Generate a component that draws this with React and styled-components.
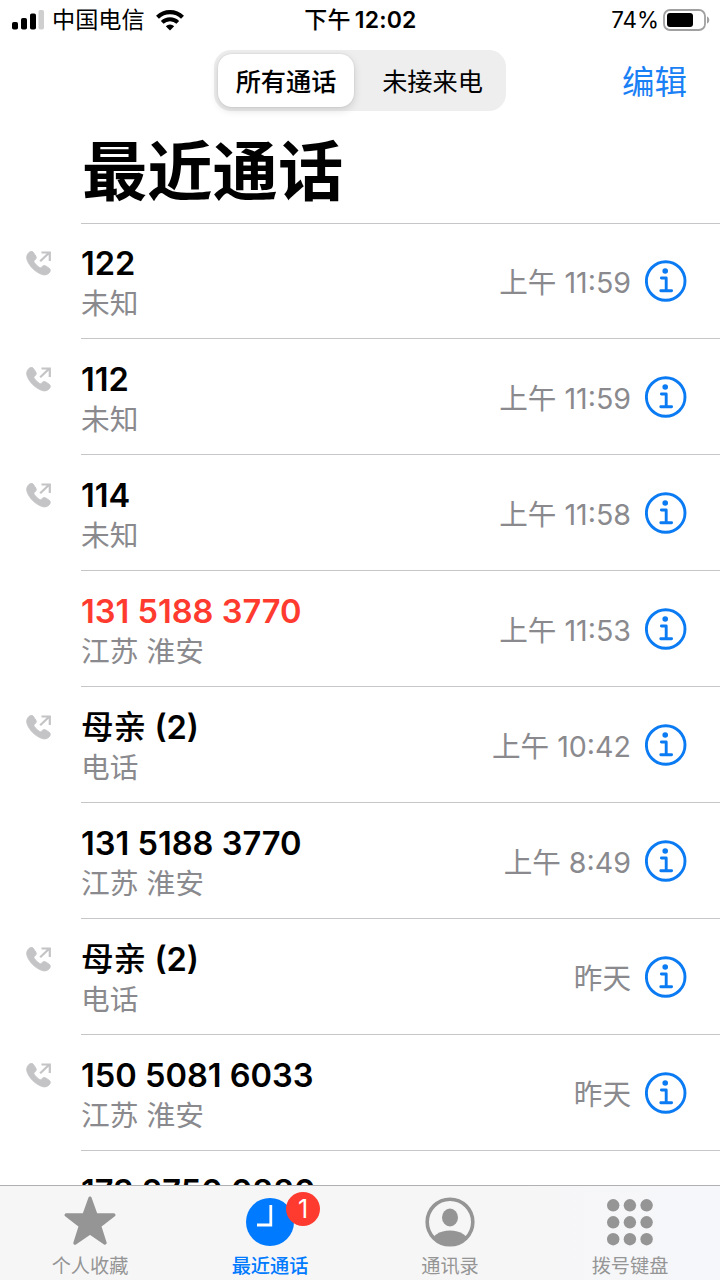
import React from 'react';
import styled, { createGlobalStyle } from 'styled-components';

const GlobalStyle = createGlobalStyle`
    * {
        box-sizing: border-box;
    }
    body {
        margin: 0;
        background: #fff;
        font-family: Inter, 'Noto Sans CJK SC', sans-serif;
        color: #000;
    }
    svg {
        display: block;
    }
`;

const Screen = styled.div`
    width: 720px;
    height: 1280px;
    display: flex;
    flex-direction: column;
    overflow: hidden;
    background: #fff;
    white-space: nowrap;
`;

const StatusBar = styled.div`
    display: grid;
    grid-template-columns: 1fr auto 1fr;
    align-items: center;
    height: 40px;
    padding: 0 10px 0 12px;
    font-size: 23px;
    line-height: 40px;
`;

const StatusGroup = styled.div`
    display: flex;
    align-items: center;
    justify-content: ${props => props.$end ? 'flex-end' : 'flex-start'};
    gap: ${props => props.$end ? '4px' : '8px'};
`;

const Carrier = styled.span`
    margin-right: 3px;
    font-size: 23.2px;
`;

const BatteryLevel = styled.span`
    font-size: 22.4px;
`;

const Clock = styled.div`
    margin-left: -1px;
    font-weight: 600;
    letter-spacing: 0.2px;
    span {
        font-weight: 500;
        margin-right: 4px;
    }
`;

const NavBar = styled.div`
    display: grid;
    grid-template-columns: 1fr 292px 1fr;
    align-items: center;
    height: 81px;
`;

const Segments = styled.div`
    grid-column: 2;
    display: flex;
    height: 61px;
    padding: 4px;
    border-radius: 17px;
    background: #eeeeef;
`;

const Segment = styled.div`
    flex: ${props => props.$active ? '0 0 136px' : '1'};
    padding-left: ${props => props.$active ? '0' : '9px'};
    border-radius: 14px;
    text-align: center;
    font-size: 25.2px;
    line-height: 56px;
    font-weight: ${props => props.$active ? 500 : 400};
    background: ${props => props.$active ? '#fff' : 'transparent'};
    box-shadow: ${props => props.$active ? '0 3px 8px rgba(0, 0, 0, 0.14), 0 0 2px rgba(0, 0, 0, 0.12)' : 'none'};
`;

const EditButton = styled.div`
    justify-self: end;
    margin: 5px 33px 0 0;
    font-size: 32.5px;
    line-height: 48px;
    color: #1a80f5;
`;

const Title = styled.h1`
    margin: 0;
    height: 102px;
    padding: 3px 0 0 82px;
    font-size: 65.3px;
    line-height: 96px;
    font-weight: 700;
`;

const CallList = styled.div`
    flex: 1;
    min-height: 0;
    overflow: hidden;
`;

const Direction = styled.div`
    width: 81px;
    padding: 29px 0 0 25.5px;
`;

const CallBody = styled.div`
    flex: 1;
    display: flex;
    justify-content: space-between;
    border-top: 1px solid #c6c6c8;
    padding-right: 33px;
`;

const CallText = styled.div`
    padding-top: 20px;
`;

const CallName = styled.div`
    font-size: 32.6px;
    line-height: 40px;
    font-weight: 600;
    color: ${props => props.$missed ? '#ff3b30' : '#000'};
    span {
        font-weight: 500;
    }
`;

const CallPlace = styled.div`
    padding-top: 1px;
    font-size: 28.7px;
    line-height: 40px;
    color: #8a8a8e;
`;

const CallMeta = styled.div`
    display: flex;
    align-items: center;
    gap: 14px;
    height: 115px;
    font-size: 28.6px;
    color: #8a8a8e;
`;

const CallTime = styled.div`
    padding-bottom: 0;
`;

const CallRow = styled.div`
    display: flex;
    height: 116px;
    &:first-child {
        height: 115px;
    }
    &:first-child ${Direction} {
        padding-top: 28px;
    }
    &:first-child ${CallText} {
        padding-top: 19px;
    }
    &:first-child ${CallMeta} {
        height: 113px;
    }
`;

const TabBar = styled.div`
    display: grid;
    grid-template-columns: repeat(4, 1fr);
    height: 95px;
    border-top: 1px solid #b0b0b3;
    background: linear-gradient(90deg, #f6f6f6 70%, #f6f7fb);
`;

const Tab = styled.div`
    display: flex;
    flex-direction: column;
    align-items: center;
    padding-top: 10px;
    font-size: 19.2px;
    line-height: 28px;
    font-weight: ${props => props.$active ? 500 : 400};
    color: ${props => props.$active ? '#007aff' : '#959595'};
`;

const TabIcon = styled.div`
    position: relative;
    height: 56px;
`;

const Badge = styled.div`
    position: absolute;
    left: 40px;
    top: -4px;
    width: 34px;
    height: 34px;
    border-radius: 50%;
    background: #ff3b30;
    color: #fff;
    font-size: 25px;
    line-height: 34px;
    font-weight: 400;
    text-align: center;
`;

const SignalIcon = () => (
    <svg width="32" height="20" viewBox="0 0 32 20">
        <rect x="0" y="12" width="6" height="7.5" rx="1.8" />
        <rect x="9" y="8" width="6" height="11.5" rx="1.8" />
        <rect x="18" y="3.5" width="6" height="16" rx="1.8" />
        <rect x="26.5" y="0" width="5.5" height="19.5" rx="1.8" fill="#cfcfcf" />
    </svg>
);

const WifiIcon = () => (
    <svg width="28" height="21" viewBox="0 0 28 21">
        <path d="M1.5 7.2a18 18 0 0 1 25 0" fill="none" stroke="#000" strokeWidth="4.2" />
        <path d="M6.2 12.4a11.5 11.5 0 0 1 15.6 0" fill="none" stroke="#000" strokeWidth="4" />
        <path d="M14 20.5l-4.2-4.2a6 6 0 0 1 8.4 0z" />
    </svg>
);

const BatteryIcon = () => (
    <svg width="47" height="22" viewBox="0 0 47 22">
        <rect x="1" y="1" width="41" height="20" rx="6" fill="none" stroke="#a0a0a0" strokeWidth="1.8" />
        <rect x="4" y="4" width="26" height="14" rx="3" />
        <path d="M44 7.5c3 1 3 6 0 7z" fill="#a0a0a0" />
    </svg>
);

const OutgoingIcon = () => (
    <svg width="25" height="25" viewBox="0 0 25 25">
        <path
            fill="#c4c4c6"
            stroke="#c4c4c6"
            strokeWidth="0.8"
            d="M3.2 1.2C4.6-.2 6.6.1 7.6 1.7L9.8 5c.8 1.3.6 2.6-.5 3.6l-1 1c-.5.5-.5 1-.1 1.6 1.4 2.2 3.4 4.1 5.6 5.4.5.3 1 .2 1.4-.2l1-1c1.1-1 2.4-1.1 3.6-.4l3.2 2.1c1.5 1 1.8 3 .5 4.4-2 2.4-4.9 3.1-8.3 1.7C8.9 20.7 3.6 15.4 1.3 9.6 0 6.3.7 3.4 3.2 1.2z"
        />
        <path d="M14.2 10.2 23.4 1.5M15.5 1.5h8.3v8.4" fill="none" stroke="#c4c4c6" strokeWidth="2.2" />
    </svg>
);

const InfoIcon = () => (
    <svg width="42" height="42" viewBox="0 0 42 42" fill="none" stroke="#0b7bf3">
        <circle cx="20.7" cy="21" r="19.3" strokeWidth="2.9" />
        <circle cx="20.2" cy="11" r="2.8" fill="#0b7bf3" stroke="none" />
        <path d="M16.4 18h4.8v12.8M15.8 30.8h10.8" strokeWidth="2.9" strokeLinejoin="round" strokeLinecap="round" />
    </svg>
);

const StarIcon = () => (
    <svg width="54" height="50" viewBox="0 0 54 50">
        <path
            d="M27 2.2 33 19h17.8L36.6 29.9 42 47 27 36.8 12 47l5.4-17.1L3.2 19H21z"
            fill="#959595"
            stroke="#959595"
            strokeWidth="3.4"
            strokeLinejoin="round"
        />
    </svg>
);

const RecentsIcon = () => (
    <svg width="48" height="50" viewBox="0 0 48 50">
        <circle cx="24" cy="26" r="24" fill="#007aff" />
        <path d="M24.8 9v20H11" fill="none" stroke="#fff" strokeWidth="2.8" />
    </svg>
);

const ContactsIcon = () => (
    <svg width="50" height="51" viewBox="0 0 50 51">
        <clipPath id="face">
            <circle cx="25" cy="26" r="23" />
        </clipPath>
        <circle cx="25" cy="26" r="22.8" fill="none" stroke="#959595" strokeWidth="3.6" />
        <ellipse cx="25" cy="21.5" rx="8" ry="9" fill="#959595" />
        <ellipse cx="25" cy="47" rx="19" ry="12.5" fill="#959595" clipPath="url(#face)" />
    </svg>
);

const KeypadIcon = () => (
    <svg width="46" height="50" viewBox="0 0 46 50" fill="#959595">
        {[9.3, 26.3, 43.2].map(y => [6.2, 22.9, 39.6].map(x => (
            <circle key={`${x}-${y}`} cx={x} cy={y} r="6.2" />
        )))}
    </svg>
);

const calls = [
    { name: '122', place: '未知', time: '上午 11:59', outgoing: true },
    { name: '112', place: '未知', time: '上午 11:59', outgoing: true },
    { name: '114', place: '未知', time: '上午 11:58', outgoing: true },
    { name: '131 5188 3770', place: '江苏 淮安', time: '上午 11:53', missed: true },
    { contact: '母亲', name: ' (2)', place: '电话', time: '上午 10:42', outgoing: true },
    { name: '131 5188 3770', place: '江苏 淮安', time: '上午 8:49' },
    { contact: '母亲', name: ' (2)', place: '电话', time: '昨天', outgoing: true },
    { name: '150 5081 6033', place: '江苏 淮安', time: '昨天', outgoing: true },
    { name: '173 2750 0880' },
];

const Call = ({ call }) => (
    <CallRow>
        <Direction>{call.outgoing ? <OutgoingIcon /> : null}</Direction>
        <CallBody>
            <CallText>
                <CallName $missed={call.missed}>
                    {call.contact ? <span>{call.contact}</span> : null}
                    {call.name}
                </CallName>
                {call.place ? <CallPlace>{call.place}</CallPlace> : null}
            </CallText>
            {call.time
                ? <CallMeta>
                    <CallTime>{call.time}</CallTime>
                    <InfoIcon />
                </CallMeta>
                : null}
        </CallBody>
    </CallRow>
);

const App = () => (
    <Screen>
        <GlobalStyle />
        <StatusBar>
            <StatusGroup>
                <SignalIcon />
                <Carrier>中国电信</Carrier>
                <WifiIcon />
            </StatusGroup>
            <Clock><span>下午</span>12:02</Clock>
            <StatusGroup $end>
                <BatteryLevel>74%</BatteryLevel>
                <BatteryIcon />
            </StatusGroup>
        </StatusBar>
        <NavBar>
            <Segments>
                <Segment $active>所有通话</Segment>
                <Segment>未接来电</Segment>
            </Segments>
            <EditButton>编辑</EditButton>
        </NavBar>
        <Title>最近通话</Title>
        <CallList>
            {calls.map((call, index) => <Call key={index} call={call} />)}
        </CallList>
        <TabBar>
            <Tab>
                <TabIcon><StarIcon /></TabIcon>
                个人收藏
            </Tab>
            <Tab $active>
                <TabIcon>
                    <RecentsIcon />
                    <Badge>1</Badge>
                </TabIcon>
                最近通话
            </Tab>
            <Tab>
                <TabIcon><ContactsIcon /></TabIcon>
                通讯录
            </Tab>
            <Tab>
                <TabIcon><KeypadIcon /></TabIcon>
                拨号键盘
            </Tab>
        </TabBar>
    </Screen>
);

export default App;
